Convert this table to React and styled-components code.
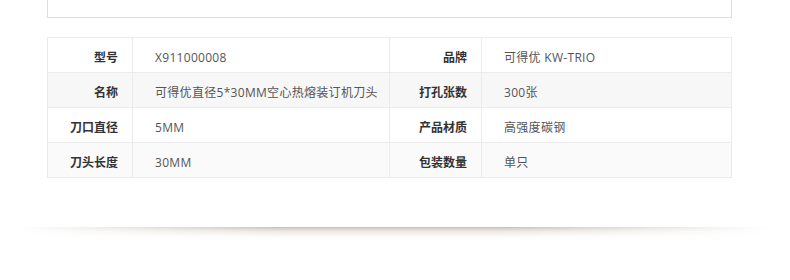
import React from 'react'
import styled, { createGlobalStyle } from 'styled-components'

const GlobalStyle = createGlobalStyle`
  html, body {
    margin: 0;
    padding: 0;
    background: #fff;
  }
  body {
    font-family: 'Open Sans', 'Noto Sans CJK SC', sans-serif;
  }
`

const specs = [
  ['型号', 'X911000008', '品牌', '可得优 KW-TRIO'],
  ['名称', '可得优直径5*30MM空心热熔装订机刀头', '打孔张数', '300张'],
  ['刀口直径', '5MM', '产品材质', '高强度碳钢'],
  ['刀头长度', '30MM', '包装数量', '单只'],
]

const rowShades = ['#fff', '#f7f7f7', '#fff', '#fafafa']

export default function App() {
  return (
    <Page>
      <GlobalStyle />
      <Content>
        <TopBox />
        <SpecTable>
          {specs.map((row, i) =>
            row.map((text, j) =>
              j % 2 === 0 ? (
                <Label key={`${i}-${j}`} $shade={rowShades[i]}>{text}</Label>
              ) : (
                <Value key={`${i}-${j}`} $shade={rowShades[i]}>{text}</Value>
              )
            )
          )}
        </SpecTable>
      </Content>
      <FloorShadow />
    </Page>
  )
}

const Page = styled.div`
  width: 790px;
  height: 280px;
  overflow: hidden;
  background: #fff;
`

const Content = styled.div`
  padding: 0 58px 0 47px;
`

const TopBox = styled.div`
  width: 683px;
  height: 17px;
  border: 1px solid #dcdcdc;
  border-top: none;
`

const SpecTable = styled.div`
  margin-top: 19px;
  width: 684px;
  display: grid;
  grid-template-columns: 85px 257px 92px 250px;
  grid-auto-rows: 35px;
  border-top: 1px solid #ebebeb;
  border-left: 1px solid #ebebeb;
`

const Cell = styled.div`
  display: flex;
  align-items: center;
  padding-top: 6px;
  box-sizing: border-box;
  font-size: 12px;
  line-height: 16px;
  white-space: nowrap;
  background: ${(p) => p.$shade};
  border-right: 1px solid #ebebeb;
  border-bottom: 1px solid #ebebeb;
`

const Label = styled(Cell)`
  justify-content: flex-end;
  padding-right: 14px;
  font-weight: 700;
  color: #333;
`

const Value = styled(Cell)`
  padding-left: 22px;
  letter-spacing: 0.3px;
  color: #555;
`

const FloorShadow = styled.div`
  margin: 49px 0 0 20px;
  width: 750px;
  height: 14px;
  background: linear-gradient(
    to bottom,
    rgba(185, 177, 167, 0.8) 0%,
    rgba(212, 205, 197, 0.45) 30%,
    rgba(240, 236, 230, 0.15) 70%,
    rgba(255, 255, 255, 0) 100%
  );
  -webkit-mask-image: linear-gradient(to right, transparent 0%, #000 35%, #000 65%, transparent 100%);
  mask-image: linear-gradient(to right, transparent 0%, #000 35%, #000 65%, transparent 100%);
`
